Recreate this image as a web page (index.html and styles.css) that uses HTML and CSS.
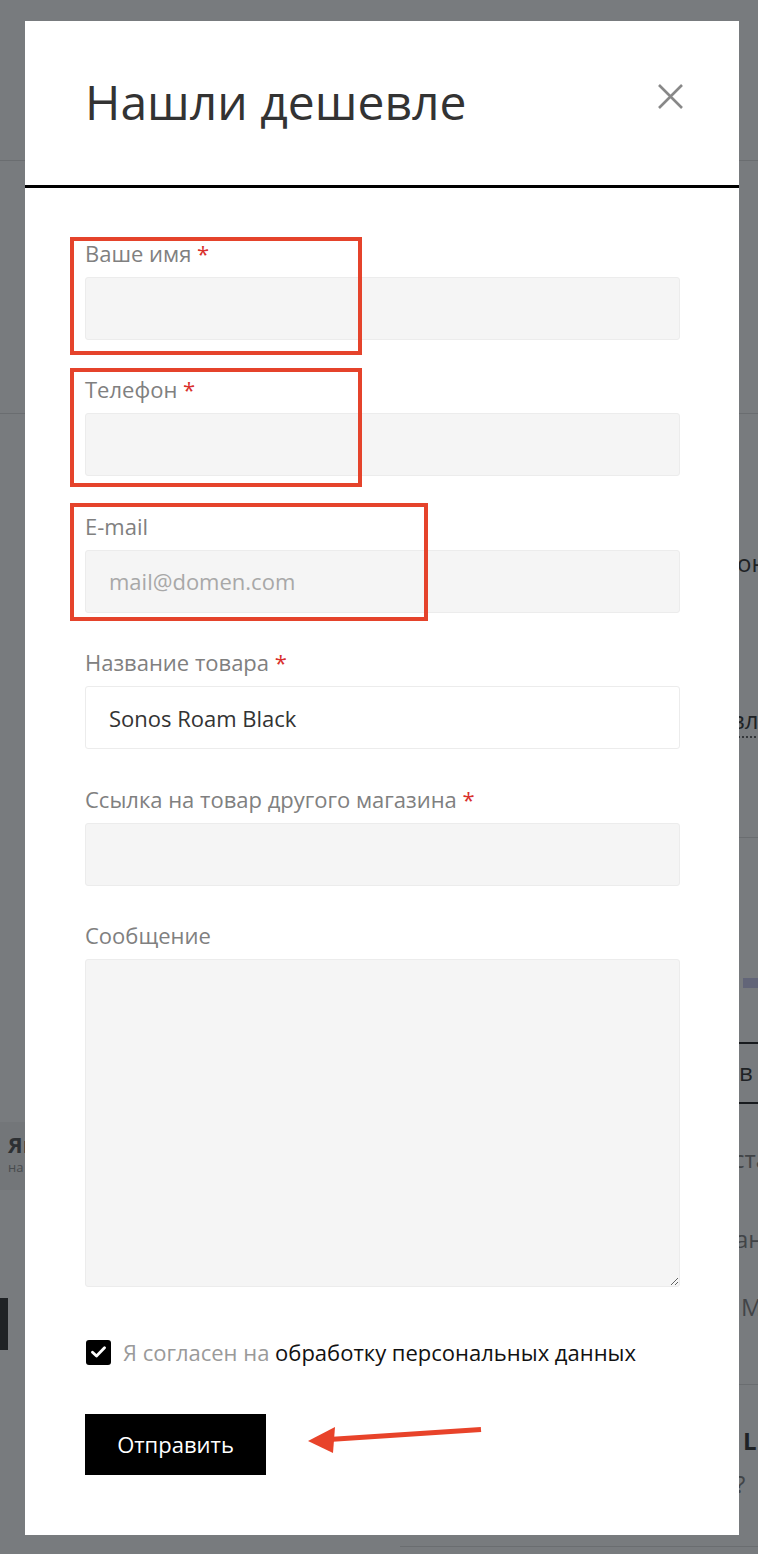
FILE: index.html
```html
<!DOCTYPE html>
<html lang="ru">
<head>
<meta charset="UTF-8">
<meta name="viewport" content="width=device-width, initial-scale=1.0">
<title>Нашли дешевле</title>
<link rel="stylesheet" href="styles.css">
</head>
<body>
<div class="page">
    <div class="page-top"></div>
    <div class="page-band"></div>
    <div class="page-main">
        <div class="page-left">
            <div class="ya-badge"><b>Ян</b><span>на</span></div>
            <div class="dark-btn"></div>
        </div>
        <div class="page-right">
            <div class="frag frag-1">он</div>
            <div class="frag frag-2"><span class="dotted">вле</span></div>
            <div class="rule rule-1"></div>
            <div class="pay-badge"></div>
            <div class="tabs">в</div>
            <div class="frag frag-3">ста</div>
            <div class="frag frag-4">ан</div>
            <div class="frag frag-5">М</div>
            <div class="rule rule-2"></div>
            <div class="frag frag-6"><b>L</b></div>
            <div class="frag frag-7">?</div>
        </div>
    </div>
    <div class="page-foot"></div>
</div>

<div class="overlay"></div>

<div class="modal" role="dialog" aria-label="Нашли дешевле">
    <div class="modal-head">
        <h2 class="modal-title">Нашли дешевле</h2>
        <button class="modal-close" aria-label="Закрыть">
            <svg width="25" height="25" viewBox="0 0 25 25"><path d="M1 1L24 24M24 1L1 24" stroke="#888" stroke-width="2.6" fill="none"/></svg>
        </button>
    </div>

    <form class="modal-body">
        <div class="field">
            <label class="field-label" for="name">Ваше имя <span class="req">*</span></label>
            <input class="field-input" id="name" type="text">
        </div>
        <div class="field">
            <label class="field-label" for="phone">Телефон <span class="req">*</span></label>
            <input class="field-input" id="phone" type="text">
        </div>
        <div class="field">
            <label class="field-label" for="email">E-mail</label>
            <input class="field-input" id="email" type="text" placeholder="mail@domen.com">
        </div>
        <div class="field">
            <label class="field-label" for="product">Название товара <span class="req">*</span></label>
            <input class="field-input filled" id="product" type="text" value="Sonos Roam Black">
        </div>
        <div class="field">
            <label class="field-label" for="link">Ссылка на товар другого магазина <span class="req">*</span></label>
            <input class="field-input" id="link" type="text">
        </div>
        <div class="field field-msg">
            <label class="field-label" for="msg">Сообщение</label>
            <textarea class="field-input field-area" id="msg"></textarea>
        </div>

        <label class="agree">
            <span class="check">
                <svg width="15" height="12" viewBox="0 0 15 12"><path d="M1.5 6.2L5.5 10L13.5 1.8" stroke="#fff" stroke-width="2.8" fill="none" stroke-linecap="round" stroke-linejoin="round"/></svg>
            </span>
            <span class="agree-text">Я согласен на <a href="#">обработку персональных данных</a></span>
        </label>

        <button class="submit" type="button">Отправить</button>
    </form>

    <div class="mark mark-1"></div>
    <div class="mark mark-2"></div>
    <div class="mark mark-3"></div>
    <svg class="arrow" width="200" height="50" viewBox="0 0 200 50">
        <path d="M34 23.6L186 13.6" stroke="#e8432a" stroke-width="5" fill="none"/>
        <path d="M13 25L40 11L38 37Z" fill="#e8432a"/>
    </svg>
</div>
</body>
</html>
```

FILE: styles.css
```css
* { margin: 0; padding: 0; box-sizing: border-box; }
body {
    width: 758px;
    height: 1554px;
    overflow: hidden;
    background: #fff;
    font-family: 'Open Sans', 'Noto Sans', sans-serif;
    color: #333;
}

/* page behind the popup */
.page {
    width: 758px;
    height: 1554px;
    display: flex;
    flex-direction: column;
}
.page-top {
    height: 161px;
    border-bottom: 1px solid #dcdcdc;
}
.page-band {
    height: 253px;
    border-bottom: 1px solid #dcdcdc;
}
.page-main {
    flex: 1;
    display: flex;
    justify-content: space-between;
}
.page-left {
    width: 25px;
    overflow: hidden;
}
.ya-badge {
    margin-top: 708px;
    width: 80px;
    height: 68px;
    background: #f2f2f2;
    padding: 10px 0 0 8px;
    display: flex;
    flex-direction: column;
    gap: 4px;
    font-size: 22px;
    line-height: 24px;
    color: #444;
}
.ya-badge span {
    font-size: 13px;
    line-height: 15px;
    color: #888;
}
.dark-btn {
    margin-top: 108px;
    width: 8px;
    height: 52px;
    background: #222;
}
.page-right {
    width: 19px;
    overflow: hidden;
    white-space: nowrap;
    font-size: 24px;
    color: #222;
}
.frag { line-height: 30px; }
.frag-1 { margin-top: 134px; margin-left: -2px; }
.frag-2 { margin-top: 127px; margin-left: -8px; }
.dotted { border-bottom: 2px dotted #555; }
.rule { height: 1px; background: #dcdcdc; }
.rule-1 { margin-top: 102px; }
.pay-badge {
    margin-top: 140px;
    margin-left: 4px;
    width: 40px;
    height: 10px;
    background: #c8c8f0;
}
.tabs {
    margin-top: 54px;
    height: 62px;
    border-top: 2px solid #111;
    border-bottom: 2px solid #111;
    line-height: 56px;
    padding-left: 0;
}
.frag-3 { margin-top: 40px; margin-left: -6px; color: #777; }
.frag-4 { margin-top: 50px; margin-left: -4px; color: #777; }
.frag-5 { margin-top: 38px; margin-left: 2px; color: #777; }
.rule-2 { margin-top: 62px; }
.frag-6 { margin-top: 41px; margin-left: 4px; }
.frag-7 { margin-top: 13px; margin-left: -4px; color: #777; }
.page-foot {
    height: 8px;
    border-top: 1px solid #dcdcdc;
    margin-left: 400px;
}

.overlay {
    position: fixed;
    inset: 0;
    background: rgba(30, 35, 40, 0.6);
}

/* popup */
.modal {
    position: absolute;
    left: 25px;
    top: 21px;
    width: 714px;
    background: #fff;
}
.modal-head {
    height: 167px;
    border-bottom: 3px solid #000;
    display: flex;
    justify-content: space-between;
    align-items: flex-start;
    padding: 0 56px 0 60px;
}
.modal-title {
    margin-top: 57px;
    font-size: 48px;
    line-height: 48px;
    font-weight: 400;
    color: #333;
}
.modal-close {
    margin-top: 63px;
    width: 25px;
    height: 25px;
    border: none;
    background: none;
    cursor: pointer;
    display: flex;
}
.modal-body {
    padding: 50px 59px 60px 60px;
    display: flex;
    flex-direction: column;
}
.field {
    display: flex;
    flex-direction: column;
    gap: 9px;
    margin-bottom: 34.4px;
}
.field-label {
    font-size: 22px;
    line-height: 30px;
    color: #808080;
}
.req { color: #d9302c; }
.field-input {
    height: 63px;
    border: 1px solid #ececec;
    border-radius: 3px;
    background: #f5f5f5;
    padding: 0 23px;
    font-family: inherit;
    font-size: 22px;
    color: #333;
    outline: none;
}
.field-input::placeholder { color: #a8a8a8; }
.field-input.filled { background: #fff; }
.field-msg { margin-bottom: 0; }
.field-area {
    height: 328px;
    resize: both;
    padding: 16px 23px;
}

.agree {
    margin-top: 53px;
    display: flex;
    align-items: center;
    gap: 12px;
    font-size: 22px;
    line-height: 25px;
}
.check {
    width: 25px;
    height: 25px;
    margin-left: 1px;
    border-radius: 3px;
    background: #000;
    display: flex;
    align-items: center;
    justify-content: center;
}
.agree-text { color: #9a9a9a; }
.agree-text a {
    color: #111;
    text-decoration: none;
}
.submit {
    margin-top: 49px;
    align-self: flex-start;
    width: 181px;
    height: 61px;
    background: #000;
    color: #fff;
    border: none;
    font-family: inherit;
    font-size: 22px;
    cursor: pointer;
}

/* red annotations */
.mark {
    position: absolute;
    left: 45px;
    border: 4px solid #e5432b;
}
.mark-1 { top: 216px; width: 292px; height: 118px; }
.mark-2 { top: 347px; width: 292px; height: 119px; }
.mark-3 { top: 482px; width: 358px; height: 118px; }
.arrow {
    position: absolute;
    left: 270px;
    top: 1395px;
}
```
